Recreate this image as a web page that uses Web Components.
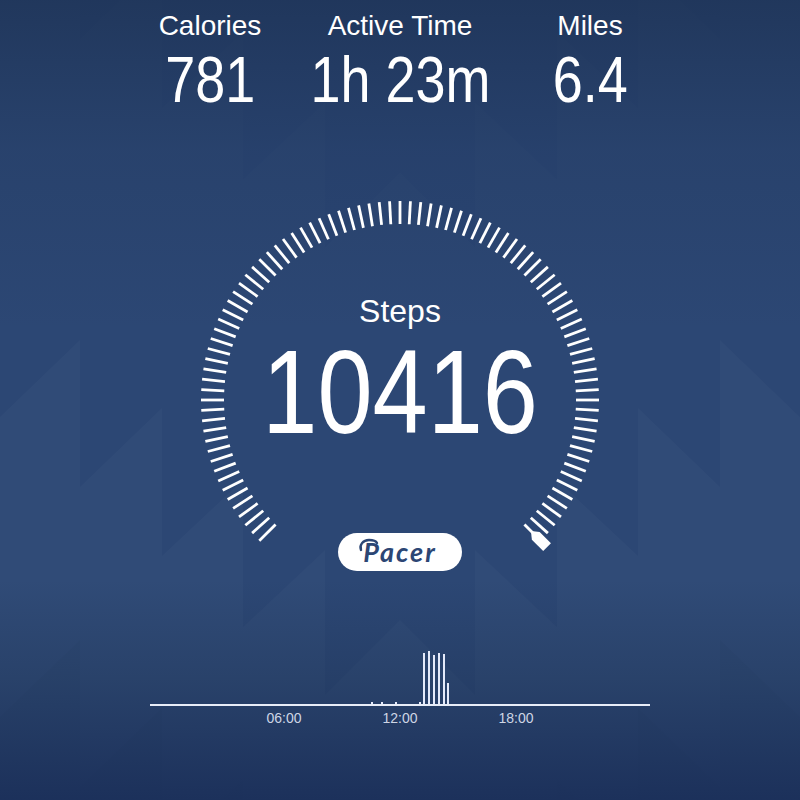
<!DOCTYPE html>
<html>
<head>
<meta charset="utf-8">
<style>
html, body { margin: 0; height: 100%; }
body { font-family: "Liberation Sans", Arial, sans-serif; color: #fff; }
</style>
</head>
<body>
<activity-screen>
    <stat-row>
        <stat-item label="Calories" value="781"></stat-item>
        <stat-item label="Active Time" value="1h 23m"></stat-item>
        <stat-item label="Miles" value="6.4"></stat-item>
    </stat-row>
    <step-gauge steps="10416"></step-gauge>
    <hour-chart></hour-chart>
</activity-screen>

<script>
// background strips: [left, right, y at left, y at right], left half only, mirrored in code
const strips = [
    [0, 80, 417, 340],
    [80, 162, 487, 408],
    [162, 243, 556, 480],
    [243, 325, 627, 550],
    [325, 400, 695, 620]
]

function stripPolygons(yShift, fill, alpha) {
    let out = ''
    for (const [x1, x2, y1, y2] of strips) {
        const left = `${x1},${y1 + yShift} ${x2},${y2 + yShift} ${x2},800 ${x1},800`
        const right = `${800 - x1},${y1 + yShift} ${800 - x2},${y2 + yShift} ${800 - x2},800 ${800 - x1},800`
        out += `<polygon points="${left}" fill="${fill}" fill-opacity="${alpha}"/>`
        out += `<polygon points="${right}" fill="${fill}" fill-opacity="${alpha}"/>`
    }
    return out
}

class ActivityScreen extends HTMLElement {
    connectedCallback() {
        const shadow = this.attachShadow({ mode: 'open' })
        shadow.innerHTML = `
<style>
:host {
    display: flex;
    flex-direction: column;
    align-items: center;
    position: relative;
    width: 800px;
    height: 800px;
    overflow: hidden;
    background: #2a4573;
}

.pattern {
    position: absolute;
    inset: 0;
}

.shade {
    position: absolute;
    inset: 0;
    background: linear-gradient(rgba(26, 46, 78, .62), rgba(26, 46, 78, .2) 150px, rgba(26, 46, 78, 0) 330px,
        rgba(26, 46, 78, 0) 580px, rgba(26, 46, 78, .32) 680px, rgba(26, 46, 88, .9) 800px);
}

slot {
    display: contents;
}

::slotted(*) {
    position: relative;
}
</style>
<svg class="pattern" width="800" height="800" viewBox="0 0 800 800">
    ${stripPolygons(-448, '#fff', 0.01)}
    ${stripPolygons(0, '#fff', 0.022)}
    ${stripPolygons(300, '#000', 0.025)}
</svg>
<div class="shade"></div>
<slot></slot>`
    }
}

class StatRow extends HTMLElement {
    connectedCallback() {
        const shadow = this.attachShadow({ mode: 'open' })
        shadow.innerHTML = `
<style>
:host {
    display: grid;
    grid-template-columns: repeat(3, 180px);
    column-gap: 10px;
    justify-content: center;
    height: 200px;
    padding-top: 10px;
    box-sizing: border-box;
}
</style>
<slot></slot>`
    }
}

class StatItem extends HTMLElement {
    connectedCallback() {
        const shadow = this.attachShadow({ mode: 'open' })
        shadow.innerHTML = `
<style>
:host {
    display: flex;
    flex-direction: column;
    align-items: center;
    white-space: nowrap;
}

.label {
    font-size: 28px;
    line-height: 32px;
}

.value {
    font-size: 65px;
    line-height: 64px;
    margin-top: 6px;
    transform: scaleX(.83);
}
</style>
<span class="label">${this.getAttribute('label')}</span>
<span class="value">${this.getAttribute('value')}</span>`
    }
}

class StepGauge extends HTMLElement {
    connectedCallback() {
        const shadow = this.attachShadow({ mode: 'open' })

        // 90 plain ticks three degrees apart, the last slot holds the pointer
        let ticks = ''
        for (let deg = -135; deg < 135; deg += 3) {
            ticks += `<line x1="200" y1="1" x2="200" y2="24" transform="rotate(${deg} 200 200)"/>`
        }

        shadow.innerHTML = `
<style>
:host {
    display: block;
    width: 400px;
    height: 440px;
}

svg {
    position: absolute;
    left: 0;
    top: 0;
    overflow: visible;
}

.body {
    position: relative;
    display: flex;
    flex-direction: column;
    align-items: center;
}

.title {
    margin-top: 93px;
    font-size: 32px;
    line-height: 36px;
}

.steps {
    font-size: 118px;
    line-height: 112px;
    margin-top: 7px;
    transform: scaleX(.84);
}

.logo {
    position: relative;
    display: flex;
    align-items: center;
    justify-content: center;
    width: 124px;
    height: 38px;
    margin-top: 85px;
    border-radius: 19px;
    background: #fff;
    color: #2c4674;
    font: italic 700 27px/38px Lato, sans-serif;
    letter-spacing: 2px;
}

.logo svg {
    left: 20px;
    top: 4px;
}
</style>
<svg width="400" height="400" viewBox="0 0 400 400">
    <g stroke="#fff" stroke-width="2.8">${ticks}</g>
    <g transform="rotate(135 200 200)">
        <line x1="200" y1="12" x2="200" y2="24" stroke="#fff" stroke-width="2.8"/>
        <polygon points="194.5,-8 205.5,-8 205.5,8 201.500,13 198.500,13 194.5,8" fill="#fff"/>
    </g>
</svg>
<div class="body">
    <span class="title">Steps</span>
    <span class="steps">${this.getAttribute('steps')}</span>
    <span class="logo">
        <svg width="22" height="18" viewBox="0 0 22 18">
            <path d="M3 13 C1 8 5 3 11 3 C15 3 18 4 19 6" fill="none" stroke="#2c4674" stroke-width="2.4" stroke-linecap="round"/>
        </svg>
        Pacer
    </span>
</div>`
    }
}

class HourChart extends HTMLElement {
    connectedCallback() {
        const shadow = this.attachShadow({ mode: 'open' })

        // [offset along the axis, height] for every bar with any steps in it
        const bars = [[221, 2], [231, 2], [245, 2], [269, 2], [273, 51], [278, 53], [283, 49],
            [288, 51], [293, 50], [297, 21]]
        const bar = bars.map(([x, h]) => `<i style="left:${x}px;height:${h}px"></i>`).join('')

        shadow.innerHTML = `
<style>
:host {
    display: block;
    width: 500px;
}

.plot {
    position: relative;
    height: 64px;
    border-bottom: 2px solid #e8edf8;
}

i {
    position: absolute;
    bottom: 0;
    width: 2px;
    background: #e4eafa;
}

.hours {
    display: grid;
    grid-template-columns: repeat(3, 116px);
    justify-content: center;
    margin-top: 4px;
    text-align: center;
    font-size: 14px;
    line-height: 16px;
    color: #ced6e5;
}
</style>
<div class="plot">${bar}</div>
<div class="hours"><span>06:00</span><span>12:00</span><span>18:00</span></div>`
    }
}

customElements.define('activity-screen', ActivityScreen)
customElements.define('stat-row', StatRow)
customElements.define('stat-item', StatItem)
customElements.define('step-gauge', StepGauge)
customElements.define('hour-chart', HourChart)
</script>
</body>
</html>
